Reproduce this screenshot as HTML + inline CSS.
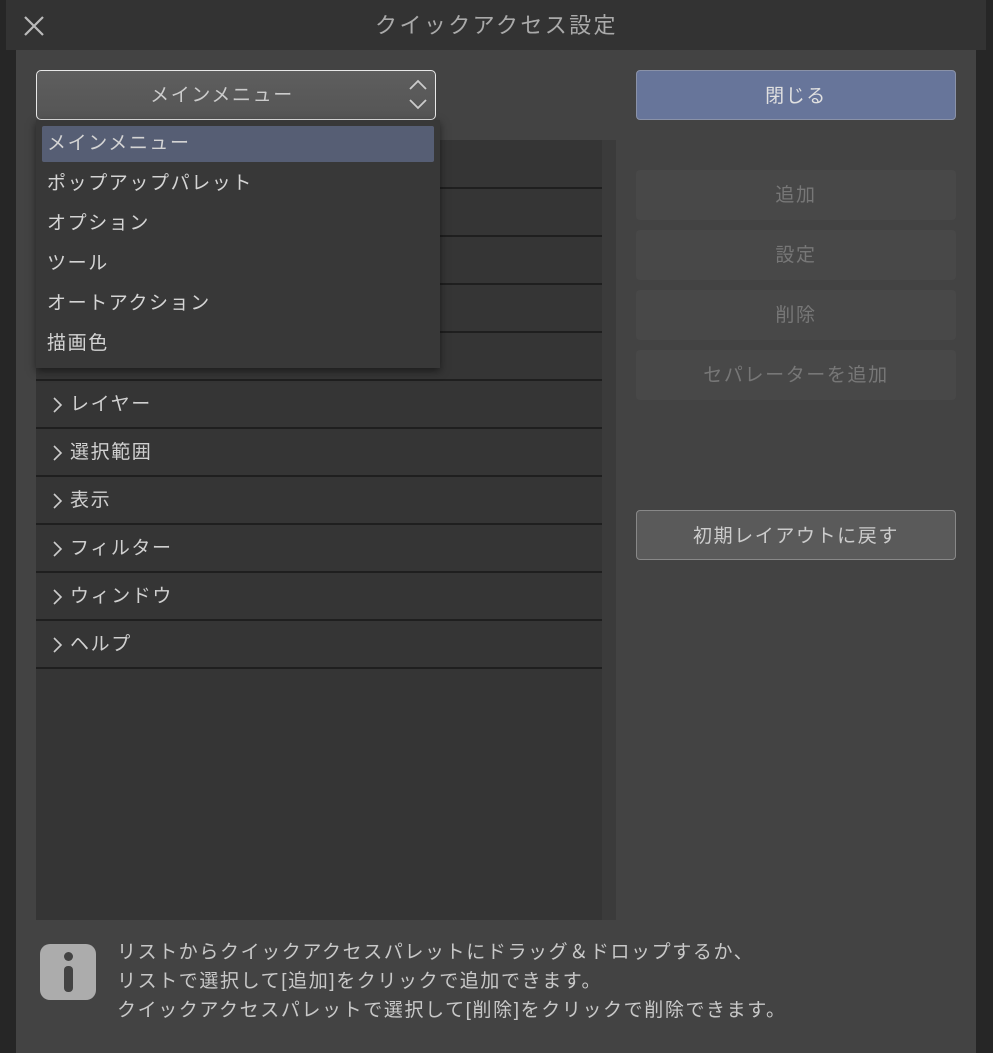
<!DOCTYPE html>
<html><head><meta charset="utf-8"><style>
*{margin:0;padding:0;box-sizing:border-box}
body{width:993px;height:1053px;background:#262626;position:relative;overflow:hidden;font-family:"Liberation Sans","Noto Sans CJK JP",sans-serif;color:#d0d0d0;letter-spacing:1.6px}
.abs{position:absolute}
.title{left:6px;top:0;width:980px;height:50px;background:#333;}
.content{left:16px;top:50px;width:960px;height:1003px;background:#434343}
.btn{position:absolute;left:636px;width:320px;height:50px;border-radius:4px;text-align:center;line-height:51px;font-size:19px}
.dis{background:#484848;color:#777}
.row{position:absolute;left:36px;width:566px;height:48px;border-bottom:2px solid #1f1f1f;font-size:19px;line-height:48px;padding-left:34px;color:#d0d0d0}
.row svg{position:absolute;left:16px;top:15px}
.mi{position:absolute;left:47px;font-size:19px;color:#d4d4d4;height:40px;line-height:42px}
</style></head><body>
<div class="abs title"></div>
<svg class="abs" style="left:22px;top:14px" width="24" height="24"><path d="M3 3L21 21M21 3L3 21" stroke="#bbb" stroke-width="2.2"/></svg>
<div class="abs" style="left:0;top:10px;width:993px;text-align:center;font-size:22px;color:#aaa;line-height:32px;letter-spacing:2.4px">クイックアクセス設定</div>
<div class="abs content"></div>
<div class="abs" style="left:36px;top:140px;width:580px;height:780px;background:#353535"></div>
<div class="abs" style="left:602px;top:140px;width:14px;height:780px;background:#3b3b3b"></div>
<div class="row" style="top:141px"></div>
<div class="row" style="top:189px"></div>
<div class="row" style="top:237px"></div>
<div class="row" style="top:285px"></div>
<div class="row" style="top:333px"></div>
<div class="row" style="top:381px"><svg width="12" height="18"><path d="M2 2L9 9L2 16" stroke="#ccc" stroke-width="1.6" fill="none"/></svg>レイヤー</div>
<div class="row" style="top:429px"><svg width="12" height="18"><path d="M2 2L9 9L2 16" stroke="#ccc" stroke-width="1.6" fill="none"/></svg>選択範囲</div>
<div class="row" style="top:477px"><svg width="12" height="18"><path d="M2 2L9 9L2 16" stroke="#ccc" stroke-width="1.6" fill="none"/></svg>表示</div>
<div class="row" style="top:525px"><svg width="12" height="18"><path d="M2 2L9 9L2 16" stroke="#ccc" stroke-width="1.6" fill="none"/></svg>フィルター</div>
<div class="row" style="top:573px"><svg width="12" height="18"><path d="M2 2L9 9L2 16" stroke="#ccc" stroke-width="1.6" fill="none"/></svg>ウィンドウ</div>
<div class="row" style="top:621px"><svg width="12" height="18"><path d="M2 2L9 9L2 16" stroke="#ccc" stroke-width="1.6" fill="none"/></svg>ヘルプ</div>
<div class="abs" style="left:36px;top:70px;width:400px;height:50px;border:1.5px solid #e8e8e8;border-radius:5px;background:linear-gradient(#5e5e5e,#555);text-align:center;line-height:50px;font-size:19px;color:#ccc;padding-right:28px">メインメニュー</div>
<svg class="abs" style="left:406px;top:76px" width="26" height="38"><path d="M4 13L12 5L20 13M4 24L12 32L20 24" stroke="#ccc" stroke-width="1.8" fill="none"/></svg>
<div class="abs" style="left:36px;top:120px;width:404px;height:248px;background:#383838;box-shadow:0 3px 8px rgba(0,0,0,.5)"></div>
<div class="abs" style="left:42px;top:126px;width:392px;height:36px;background:#565e74;border-radius:2px"></div>
<div class="mi" style="top:123px">メインメニュー</div>
<div class="mi" style="top:163px">ポップアップパレット</div>
<div class="mi" style="top:203px">オプション</div>
<div class="mi" style="top:243px">ツール</div>
<div class="mi" style="top:283px">オートアクション</div>
<div class="mi" style="top:323px">描画色</div>
<div class="btn" style="top:70px;background:#67759a;border:1px solid #8a92a8;color:#e0e0e0">閉じる</div>
<div class="btn dis" style="top:170px">追加</div>
<div class="btn dis" style="top:230px">設定</div>
<div class="btn dis" style="top:290px">削除</div>
<div class="btn dis" style="top:350px">セパレーターを追加</div>
<div class="btn" style="top:510px;background:#5a5a5a;border:1px solid #888;color:#ccc">初期レイアウトに戻す</div>
<div class="abs" style="left:40px;top:944px;width:56px;height:56px;background:#acacac;border-radius:10px"></div>
<div class="abs" style="left:64px;top:952px;width:9px;height:9px;border-radius:50%;background:#434343"></div>
<div class="abs" style="left:64px;top:966px;width:9px;height:26px;border-radius:4px;background:#434343"></div>
<div class="abs" style="left:117px;top:938px;font-size:19px;line-height:29px;color:#c8c8c8">リストからクイックアクセスパレットにドラッグ＆ドロップするか、<br>リストで選択して[追加]をクリックで追加できます。<br>クイックアクセスパレットで選択して[削除]をクリックで削除できます。</div>
</body></html>
